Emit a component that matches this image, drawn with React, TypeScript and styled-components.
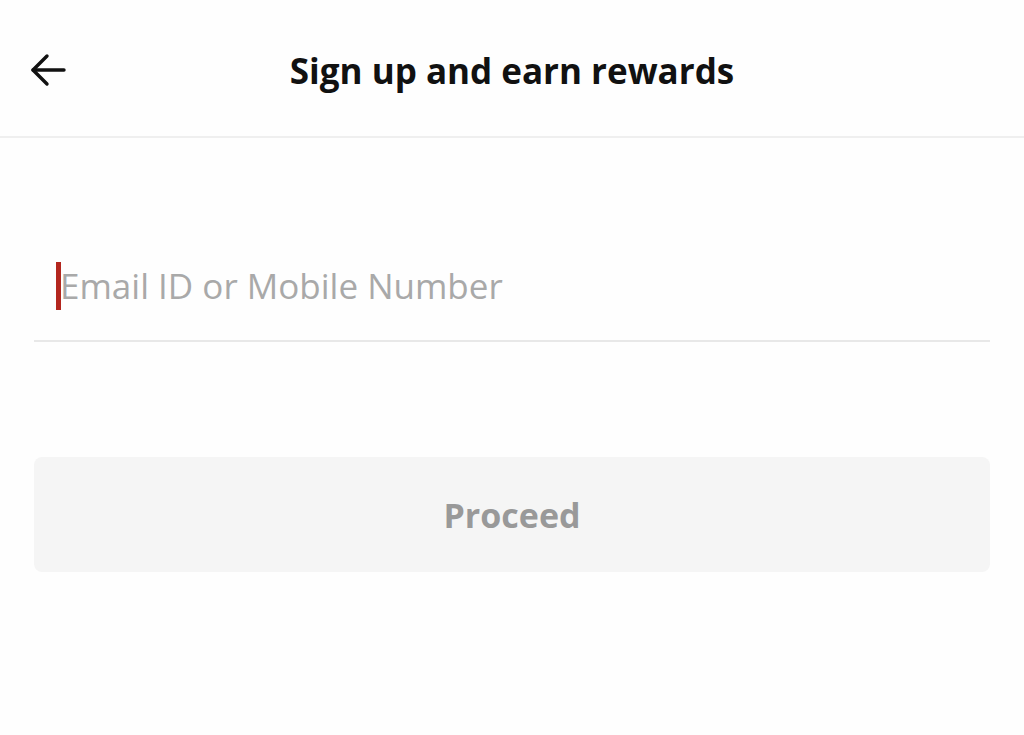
import React from 'react'
import styled, { createGlobalStyle } from 'styled-components'

const GlobalStyle = createGlobalStyle`
  html, body {
    margin: 0;
    padding: 0;
    background: #fefefe;
    font-family: 'Open Sans', 'Noto Sans', sans-serif;
  }
`

const Page = styled.div`
  width: 1024px;
  height: 735px;
  background: #fefefe;
`

const Header = styled.header`
  position: relative;
  height: 136px;
  display: flex;
  align-items: center;
  justify-content: center;
  border-bottom: 2px solid #efefef;
`

const BackButton = styled.button`
  position: absolute;
  left: 26px;
  top: 50px;
  width: 44px;
  height: 40px;
  padding: 0;
  border: 0;
  background: none;
  display: flex;
  align-items: center;
  justify-content: center;
`

const Title = styled.h1`
  margin: 4px 0 0;
  font-size: 35px;
  font-weight: 700;
  color: #111;
`

const Content = styled.main`
  padding: 124px 34px 0;
`

const Field = styled.div`
  height: 78px;
  display: flex;
  align-items: flex-start;
  padding-left: 22px;
  border-bottom: 2px solid #e8e8e8;
`

const Caret = styled.span`
  flex: none;
  width: 5px;
  height: 48px;
  background: #b3261e;
  margin-right: -1px;
`

const Placeholder = styled.span`
  font-size: 35px;
  line-height: 48px;
  color: #a9a9a9;
`

const Proceed = styled.button`
  display: block;
  margin-top: 115px;
  width: 100%;
  height: 115px;
  border: 0;
  border-radius: 8px;
  background: #f5f5f5;
  color: #999;
  font-family: inherit;
  font-size: 34px;
  font-weight: 700;
`

const ArrowIcon = () => (
  <svg width="38" height="38" viewBox="0 0 38 38" fill="none" stroke="#111" strokeWidth="3.4" strokeLinecap="round" strokeLinejoin="round">
    <path d="M35 19H4" />
    <path d="M18 5L4 19l14 14" />
  </svg>
)

const App = () => (
  <Page>
    <GlobalStyle />
    <Header>
      <BackButton aria-label="Back">
        <ArrowIcon />
      </BackButton>
      <Title>Sign up and earn rewards</Title>
    </Header>
    <Content>
      <Field>
        <Caret />
        <Placeholder>Email ID or Mobile Number</Placeholder>
      </Field>
      <Proceed>Proceed</Proceed>
    </Content>
  </Page>
)

export default App
